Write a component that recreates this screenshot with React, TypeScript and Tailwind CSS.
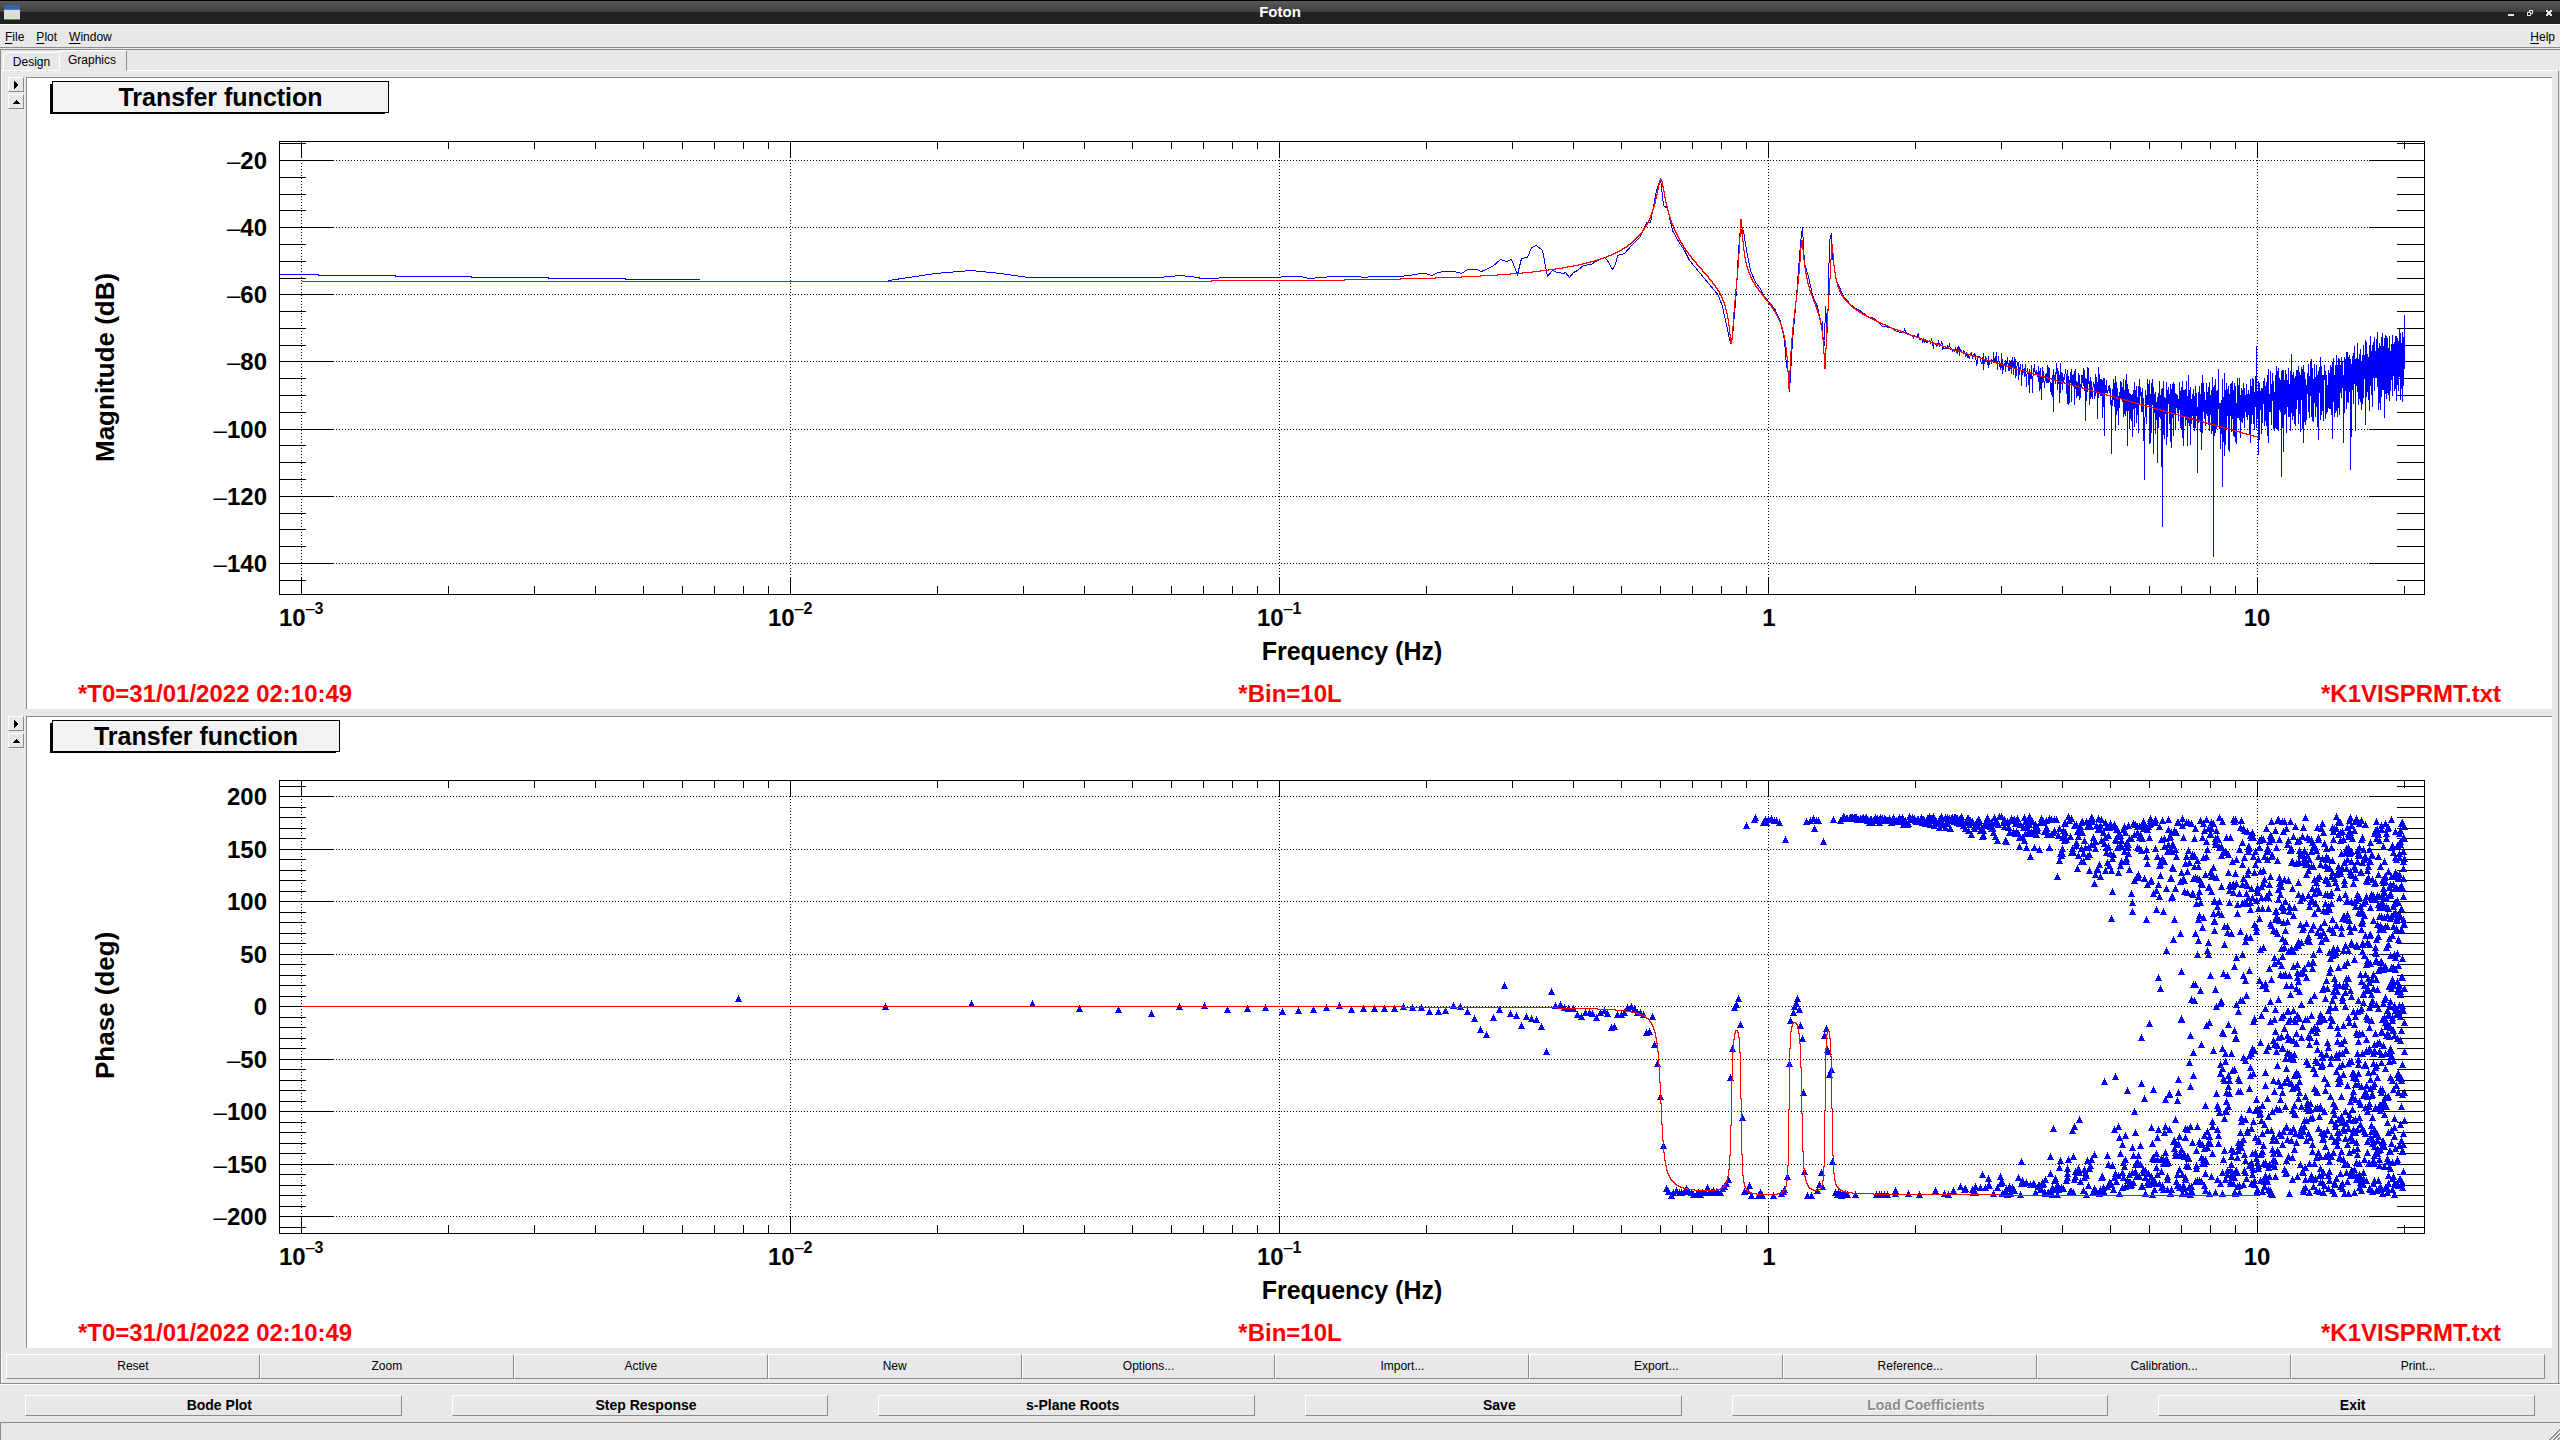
/**
 * Foton graphics tab: magnitude and phase of a transfer function.
 *
 * Both canvases share one coordinate system, whose origin is CANVAS.x / CANVAS.y.
 * The fitted curve is a product of second order sections; the measured data is
 * a table at low frequency and the fit plus noise above it.
 */

import type { ReactNode } from "react";

const CANVAS = { x: 27, y: 78, w: 2525, h: 631 };
const FRAME = { left: 279, right: 2424, top: 141, bottom: 594 };
const BIN_WIDTH = 0.0078125;

const MENUS = ["File", "Plot", "Window"];
const PAD_ACTIONS = [
  "Reset",
  "Zoom",
  "Active",
  "New",
  "Options...",
  "Import...",
  "Export...",
  "Reference...",
  "Calibration...",
  "Print...",
];
const MAIN_ACTIONS = [
  { label: "Bode Plot" },
  { label: "Step Response" },
  { label: "s-Plane Roots" },
  { label: "Save" },
  { label: "Load Coefficients", disabled: true },
  { label: "Exit" },
];

// [frequency, Q]
const POLES = [
  [0.601, 39],
  [0.877, 126],
  [1.167, 92],
  [1.345, 118],
];
const ZEROS = [
  [0.838, 85],
  [1.099, 160],
  [1.302, 164],
];

// noise floor, [Hz, dB]
const NOISE = [
  [0.5, -102],
  [1, -98],
  [2, -95],
  [3, -94],
  [4, -93],
  [5, -93],
  [7, -93],
  [8, -92],
  [10, -90],
  [14, -85],
  [17, -80],
  [20, -76],
];

// outliers of the magnitude, [Hz, dB]
const OUTLIERS = [
  [5.87, -115],
  [6.38, -129],
  [7.54, -113],
  [8.13, -138],
  [8.48, -117],
  [9.95, -75],
  [11.2, -114],
  [15.5, -112],
  [20, -66],
];

// measured magnitude below 1.9 Hz, canvas coordinates
const MAG_START = [279, 274, 317, 274, 318, 275, 394, 275, 395, 276, 470, 276, 471, 277, 547, 277, 548, 278, 624, 278, 625, 279, 700, 279];
const MAG_LEFT = [888, 280, 935, 273, 971, 270, 1000, 273, 1028, 277, 1158, 277, 1180, 275, 1198, 277];
const MAG_MID = [
  0, 414, 85, 412, 165, 411, 195, 408, 225, 409, 245, 414, 268, 413, 298, 409, 350, 409, 370, 412,
  380, 409, 445, 408, 465, 405, 495, 400, 503, 401, 517, 407, 532, 397, 547, 394, 570, 394, 585, 400,
  598, 388, 618, 388, 630, 394, 655, 378, 672, 358, 685, 364, 697, 358, 709, 403, 719, 355, 732, 353,
  741, 323, 753, 316, 765, 330, 777, 409, 788, 390, 800, 397, 812, 400, 818, 397, 826, 412, 836, 397,
  845, 391, 857, 376, 875, 372, 885, 364, 905, 352, 912, 362, 923, 388, 930, 372, 935, 346, 950, 340,
  965, 315, 985, 290, 1000, 248, 1008, 246, 1015, 200, 1022, 150, 1031, 115, 1038, 195, 1045, 205,
  1058, 270, 1070, 305, 1085, 330, 1095, 360, 1130, 415, 1160, 465, 1170, 500, 1187, 610, 1191, 590,
  1200, 450, 1206, 330, 1210, 262, 1213, 285, 1217, 270, 1222, 330, 1232, 390, 1243, 428, 1255, 445,
  1262, 465, 1285, 505, 1300, 545, 1308, 600, 1312, 678, 1317, 700, 1320, 755, 1326, 600, 1336, 470,
  1344, 310, 1349, 262, 1354, 370, 1362, 410, 1370, 465, 1382, 500, 1390, 555, 1393, 545, 1395, 635,
  1398, 600, 1401, 500, 1405, 578, 1410, 300, 1413, 280, 1416, 350, 1425, 420, 1440, 470, 1455, 492,
  1467, 505, 1480, 515, 1495, 530, 1510, 535, 1527, 560, 1545, 562, 1560, 573,
];

// measured phase of bins 1..113, in thirds of a pixel below the frame top
const PHASE_LOW = [
  657, 680, 672, 672, 688, 691, 703, 682, 678, 690, 686, 684, 695, 692, 689, 684, 677, 690, 686, 688,
  688, 688, 681, 685, 685, 696, 696, 693, 678, 680, 696, 716, 749, 765, 713, 690, 617, 701, 707, 738,
  710, 716, 719, 741, 816, 635, 677, 674, 684, 686, 686, 705, 711, 698, 699, 702, 714, 700, 692, 702,
  745, 742, 705, 704, 700, 683, 680, 688, 698, 700, 704, 758, 757, 710, 795, 852, 950, 1098, 1228,
  1235, 1248, 1240, 1232, 1238, 1240, 1235, 1228, 1235, 1238, 1244, 1246, 1240, 1245, 1238, 1240, 1225,
  1235, 1240, 1232, 1235, 1240, 1238, 1228, 1220, 1212, 1200, 893, 807, 684, 676, 657, 734, 1014,
];

// measured phase between 0.9 and 1.4 Hz, around the three resonances
const PHASE_MID = [
  1222, 137, 1240, 120, 1244, 115, 1262, 128, 1265, 120, 1268, 130, 1273, 120, 1279, 118, 1285, 124,
  1291, 122, 1297, 130, 1311, 179, 1358, 126, 1366, 122, 1376, 146, 1374, 118, 1379, 124, 1385, 123,
  1396, 185, 1418, 119, 1433, 122, 1219, 1236, 1226, 1232, 1230, 1218, 1235, 1248, 1250, 1248,
  1254, 1240, 1258, 1248, 1284, 1248, 1302, 1243, 1305, 1236, 1309, 1230, 1315, 1191, 1320, 852,
  1322, 722, 1328, 698, 1331, 680, 1334, 672, 1338, 657, 1342, 690, 1345, 737, 1349, 778, 1351, 938,
  1354, 1175, 1360, 1248, 1369, 1248, 1383, 1233, 1387, 1215, 1391, 1180, 1394, 1222, 1398, 767,
  1402, 748, 1405, 810, 1407, 816, 1410, 884, 1414, 870, 1416, 1146, 1422, 1238, 1426, 1246,
  1430, 1240, 1435, 1248, 1440, 1246, 1450, 1246, 1468, 1245, 1520, 1246, 1526, 1244, 1532, 1246,
  1538, 1246, 1557, 1232,
];

const xOf = (f: number) => 1768 + 489 * Math.log10(f);
const yMag = (db: number) => 160 - (db + 20) * 3.358;
const yPhase = (deg: number) => 367 - deg * 1.05;

function section(f: number, f0: number, q: number) {
  const re = 1 - (f / f0) ** 2;
  const im = f / (f0 * q);
  return { db: 10 * Math.log10(re * re + im * im), deg: (Math.atan2(im, re) * 180) / Math.PI };
}

function model(f: number) {
  let db = -56;
  let deg = 0;
  for (const [f0, q] of ZEROS) {
    const s = section(f, f0, q);
    db += s.db;
    deg += s.deg;
  }
  for (const [f0, q] of POLES) {
    const s = section(f, f0, q);
    db -= s.db;
    deg -= s.deg;
  }
  return { db, deg };
}

function noiseDb(f: number) {
  const i = Math.max(1, NOISE.findIndex(([nf]) => nf >= f));
  const [f1, d1] = NOISE[i - 1];
  const [f2, d2] = NOISE[i];
  return d1 + ((d2 - d1) * Math.log(f / f1)) / Math.log(f2 / f1);
}

function makeRandom(seed: number) {
  let a = seed;
  return () => {
    a = (a + 0x6d2b79f5) | 0;
    let t = Math.imul(a ^ (a >>> 15), 1 | a);
    t = (t + Math.imul(t ^ (t >>> 7), 61 | t)) ^ t;
    return ((t ^ (t >>> 14)) >>> 0) / 4294967296;
  };
}

function measure() {
  const random = makeRandom(20220131);
  const out: { f: number; db: number; deg: number }[] = [];
  for (let n = 180; n * BIN_WIDTH <= 20; n++) {
    const f = n * BIN_WIDTH;
    const m = model(f);
    const amp = 10 ** (m.db / 20);
    const arg = ((m.deg - 4.5) * Math.PI) / 180;
    const floor = noiseDb(f);
    const r = 10 ** (floor / 20) * Math.sqrt(-Math.log(1 - random()));
    const phi = random() * 2 * Math.PI;
    const re = amp * Math.cos(arg) + r * Math.cos(phi);
    const im = amp * Math.sin(arg) + r * Math.sin(phi);
    const raw = 20 * Math.log10(Math.hypot(re, im));
    // deep fades are softened, apart from the listed ones
    const low = floor - 9;
    const outlier = OUTLIERS.find(([of]) => Math.abs(of - f) <= BIN_WIDTH / 2);
    out.push({
      f,
      db: outlier ? outlier[1] : raw < low ? low + (raw - low) * 0.5 : raw,
      deg: (Math.atan2(im, re) * 180) / Math.PI,
    });
  }
  return out;
}

const MEASURED = measure();

const FIT = Array.from({ length: 3913 }, (_, i) => 10 ** (-3 + i / 978)).map((f) => ({
  f,
  ...model(f),
}));

// lines run through pixel centres
const dot = (x: number, y: number) => `${Math.round(x) + 0.5},${Math.round(y) + 0.5}`;
const pairs = (list: number[]) => list.flatMap((v, i) => (i % 2 ? [] : [[v, list[i + 1]]]));

// staircase along the pixel rows, so that a flat curve stays an unbroken line
function stairs(points: number[][]) {
  let d = "";
  let lastY = NaN;
  for (const [x, y] of points) {
    const px = Math.round(x) + 0.5;
    const py = Math.round(y) + 0.5;
    if (d === "") d = `M${px} ${py}`;
    else if (py !== lastY) d += `H${px}V${py}`;
    lastY = py;
  }
  return `${d}H${Math.round(points[points.length - 1][0])}`;
}

const fitMag = stairs(FIT.map((p) => [xOf(p.f), yMag(p.db)]));
const fitPhase = stairs(FIT.map((p) => [xOf(p.f), yPhase(p.deg)]));

const magStart = stairs(pairs(MAG_START));
const magPoints = [
  ...pairs(MAG_LEFT).map(([x, y]) => dot(x, y)),
  ...pairs(MAG_MID).map(([x, y]) => dot(1200 + x / 2.24, 140 + (y - 1) / 3)),
  ...MEASURED.filter((p) => p.f > 1.86).map((p) => dot(xOf(p.f), yMag(p.db))),
].join(" ");

const marker = (x: number, y: number) => `M${Math.round(x) + 0.5} ${Math.round(y) - 4}l3.5 7h-7z`;
const phaseMarkers = [
  ...PHASE_LOW.map((v, i) => marker(xOf((i + 1) * BIN_WIDTH), 141 + v / 3)),
  ...pairs(PHASE_MID).map(([x, y]) => marker(1200 + x / 2.24, 141 + y / 3)),
  ...MEASURED.map((p) => marker(xOf(p.f), yPhase(p.deg))),
].join("");

function range(from: number, to: number, step: number) {
  const out: number[] = [];
  for (let v = from; v <= to; v += step) out.push(v);
  return out;
}

type YAxis = { major: number[]; minor: number[]; y: (v: number) => number };

const MAG_AXIS: YAxis = { major: range(-140, -20, 20), minor: range(-145, -15, 5), y: yMag };
const PHASE_AXIS: YAxis = { major: range(-200, 200, 50), minor: range(-210, 210, 10), y: yPhase };

const DECADES = [0.001, 0.01, 0.1, 1, 10];
const X_MINOR = DECADES.flatMap((d) => range(2, 9, 1).map((k) => k * d)).filter((f) => f < 21);
const X_LABELS = [
  { x: 301, exp: "3" },
  { x: 790, exp: "2" },
  { x: 1279, exp: "1" },
];

function Axes({ axis }: { axis: YAxis }) {
  const { left, right, top, bottom } = FRAME;
  const snap = (v: number) => Math.round(v) + 0.5;
  const grid = [
    ...axis.major.map((v) => `M${left + 54} ${snap(axis.y(v))}H${right - 55}`),
    ...DECADES.map((f) => `M${snap(xOf(f))} ${top + 16}V${bottom - 16}`),
  ].join("");
  const ticks = [
    ...axis.major.map((v) => `M${left} ${snap(axis.y(v))}h54M${right} ${snap(axis.y(v))}h-55`),
    ...axis.minor.map((v) => `M${left} ${snap(axis.y(v))}h27M${right} ${snap(axis.y(v))}h-27`),
    ...DECADES.map((f) => `M${snap(xOf(f))} ${top}v16M${snap(xOf(f))} ${bottom}v-16`),
    ...X_MINOR.map((f) => `M${snap(xOf(f))} ${top}v8M${snap(xOf(f))} ${bottom}v-8`),
  ].join("");
  return (
    <g fill="none" stroke="#000" shapeRendering="crispEdges">
      <path d={grid} strokeDasharray="1 2" />
      <path d={ticks} />
      <rect x={left + 0.5} y={top + 0.5} width={right - left} height={bottom - top} />
    </g>
  );
}

function PlotCanvas({
  titleWidth,
  yTitle,
  yTitleEnd,
  axis,
  children,
}: {
  titleWidth: number;
  yTitle: string;
  yTitleEnd: number;
  axis: YAxis;
  children: ReactNode;
}) {
  return (
    <svg
      viewBox={`${CANVAS.x} ${CANVAS.y} ${CANVAS.w} ${CANVAS.h}`}
      className="block h-auto w-full bg-white font-['Liberation_Sans'] text-[24px] font-bold"
    >
      <g shapeRendering="crispEdges">
        <rect x={50} y={84} width={titleWidth - 2} height={30} fill="#000" />
        <rect x={52.5} y={81.5} width={titleWidth - 1} height={31} fill="#f2f2f2" stroke="#000" />
      </g>
      <text x={52 + titleWidth / 2} y={106} textAnchor="middle" className="text-[25px]">
        Transfer function
      </text>

      <Axes axis={axis} />
      {children}

      {axis.major.map((v) => (
        <text key={v} x={267} y={Math.round(axis.y(v)) + 9} textAnchor="end">
          {v < 0 && <tspan className="font-normal">–</tspan>}
          {Math.abs(v)}
        </text>
      ))}
      {X_LABELS.map(({ x, exp }) => (
        <text key={x} x={x - 22} y={626}>
          10
          <tspan y={614} className="text-[16px] font-normal">
            –
          </tspan>
          <tspan y={614} className="text-[16px]">
            {exp}
          </tspan>
        </text>
      ))}
      <text x={1769} y={626} textAnchor="middle">
        1
      </text>
      <text x={2257} y={626} textAnchor="middle">
        10
      </text>
      <text x={1352} y={660} textAnchor="middle" className="text-[25px]">
        Frequency (Hz)
      </text>
      <text transform={`translate(114 ${yTitleEnd}) rotate(-90)`} className="text-[26px]">
        {yTitle}
      </text>

      <g fill="#f00">
        <text x={78} y={702}>
          *T0=31/01/2022 02:10:49
        </text>
        <text x={1290} y={702} textAnchor="middle">
          *Bin=10L
        </text>
        <text x={2501} y={702} textAnchor="end">
          *K1VISPRMT.txt
        </text>
      </g>
    </svg>
  );
}

const RAISED = "border border-t-white border-l-white border-r-[#8b8b8b] border-b-[#8b8b8b]";

function PadButton({ label, points }: { label: string; points: string }) {
  return (
    <button type="button" aria-label={label} className={`flex h-[15px] w-4 items-center justify-center ${RAISED}`}>
      <svg viewBox="0 0 8 8" className="size-2" shapeRendering="crispEdges">
        <polygon points={points} />
      </svg>
    </button>
  );
}

function PlotRow({ children }: { children: ReactNode }) {
  return (
    <div className="flex gap-0.5">
      <div className="flex flex-col gap-0.5">
        <PadButton label="Show options" points="2,0 6,4 2,8" />
        <PadButton label="Maximize" points="0,6 4,2 8,6" />
      </div>
      <div className="min-w-0 flex-1 border-t border-l border-[#8b8b8b]">{children}</div>
    </div>
  );
}

function TitleBar() {
  return (
    <header className="grid h-6 grid-cols-[1fr_auto_1fr] items-center border-t border-black bg-linear-to-b from-[#5a5a5a] from-0% via-[#3c3c3c] via-50% to-[#222] to-50% px-1">
      <svg viewBox="0 0 16 16" className="size-4" shapeRendering="crispEdges">
        <rect width="16" height="15" fill="#4a7dbd" />
        <rect width="16" height="4" fill="#3465a4" />
        <rect y="5" width="16" height="9" fill="#dcdcd8" />
      </svg>
      <h1 className="pb-0.5 text-[15px] leading-5 font-bold text-white">Foton</h1>
      <div className="flex justify-end gap-[13px] pr-1">
        <button type="button" aria-label="Minimize">
          <svg viewBox="0 0 6 6" className="size-1.5" shapeRendering="crispEdges">
            <rect y="4" width="6" height="2" fill="#e0e0e0" />
          </svg>
        </button>
        <button type="button" aria-label="Restore">
          <svg viewBox="0 0 6 6" className="size-1.5" shapeRendering="crispEdges">
            <path d="M2 0h4v4h-2v2h-4v-4h2zM3 1v1h1v1h1v-2zM1 3v2h2v-2z" fill="#e0e0e0" fillRule="evenodd" />
          </svg>
        </button>
        <button type="button" aria-label="Close">
          <svg viewBox="0 0 6 6" className="size-1.5" shapeRendering="crispEdges">
            <path d="M0 0h2v1h2v-1h2v2h-1v2h1v2h-2v-1h-2v1h-2v-2h1v-2h-1z" fill="#e0e0e0" />
          </svg>
        </button>
      </div>
    </header>
  );
}

function MenuItem({ label }: { label: string }) {
  return (
    <button type="button">
      <span className="underline underline-offset-2">{label[0]}</span>
      {label.slice(1)}
    </button>
  );
}

export default function App() {
  return (
    <div className="flex min-h-screen flex-col bg-[#e8e8e8] font-['Liberation_Sans',sans-serif] text-xs text-black">
      <TitleBar />

      <nav className="flex h-6 items-center gap-3 border-t border-b border-t-white border-b-[#8b8b8b] px-[5px] pt-0.5">
        {MENUS.map((label) => (
          <MenuItem key={label} label={label} />
        ))}
        <div className="ml-auto">
          <MenuItem label="Help" />
        </div>
      </nav>

      <main className="mt-px border-t border-b border-l border-[#8b8b8b] pr-px">
        <div role="tablist" className="flex h-5 items-end pl-0.5">
          <button
            type="button"
            role="tab"
            aria-selected="false"
            className="h-[18px] w-14 rounded-tl-sm border-t border-l border-white"
          >
            Design
          </button>
          <button
            type="button"
            role="tab"
            aria-selected="true"
            className="relative -mb-px h-[21px] w-[68px] rounded-tl-sm border border-t-white border-r-[#8b8b8b] border-b-[#e8e8e8] border-l-white bg-[#e8e8e8] pr-0.5 pb-0.5"
          >
            Graphics
          </button>
        </div>

        <div className="border-t border-r border-l border-t-white border-r-[#8b8b8b] border-l-white pt-1.5 pb-1">
          <div className="flex flex-col gap-[7px] px-1.5">
            <PlotRow>
              <PlotCanvas titleWidth={337} yTitle="Magnitude (dB)" yTitleEnd={462} axis={MAG_AXIS}>
                <g fill="none" shapeRendering="crispEdges">
                  <path d={magStart} stroke="#00f" />
                  <polyline points={magPoints} stroke="#00f" />
                  <path d={fitMag} stroke="#f00" />
                </g>
              </PlotCanvas>
            </PlotRow>
            <PlotRow>
              <PlotCanvas titleWidth={288} yTitle="Phase (deg)" yTitleEnd={440} axis={PHASE_AXIS}>
                <path d={phaseMarkers} fill="#00f" shapeRendering="crispEdges" />
                <path d={fitPhase} fill="none" stroke="#f00" shapeRendering="crispEdges" />
              </PlotCanvas>
            </PlotRow>
          </div>

          <div className="mt-1.5 grid grid-cols-10 pr-[13px] pl-1">
            {PAD_ACTIONS.map((label) => (
              <button key={label} type="button" className={`h-[25px] pb-0.5 ${RAISED}`}>
                {label}
              </button>
            ))}
          </div>
        </div>
      </main>

      <div className="grid grid-cols-6 gap-[50px] border-t border-white px-[25px] pt-2.5 pb-1.5 text-sm">
        {MAIN_ACTIONS.map(({ label, disabled }) => (
          <button
            key={label}
            type="button"
            disabled={disabled}
            className={`flex h-[21px] items-center justify-center pb-0.5 pl-3 font-bold disabled:text-[#8b8b8b] disabled:[text-shadow:1px_1px_#fff] ${RAISED}`}
          >
            {label}
          </button>
        ))}
      </div>

      <footer className="flex min-h-[18px] flex-1 items-end justify-end border-t border-l border-[#8b8b8b]">
        <svg viewBox="0 0 12 12" className="size-3" fill="none">
          <path d="M1 12L12 1M5 12L12 5M9 12L12 9" stroke="#8b8b8b" strokeWidth="2" />
          <path d="M0 12L12 0M4 12L12 4M8 12L12 8" stroke="#fff" />
        </svg>
      </footer>
    </div>
  );
}
